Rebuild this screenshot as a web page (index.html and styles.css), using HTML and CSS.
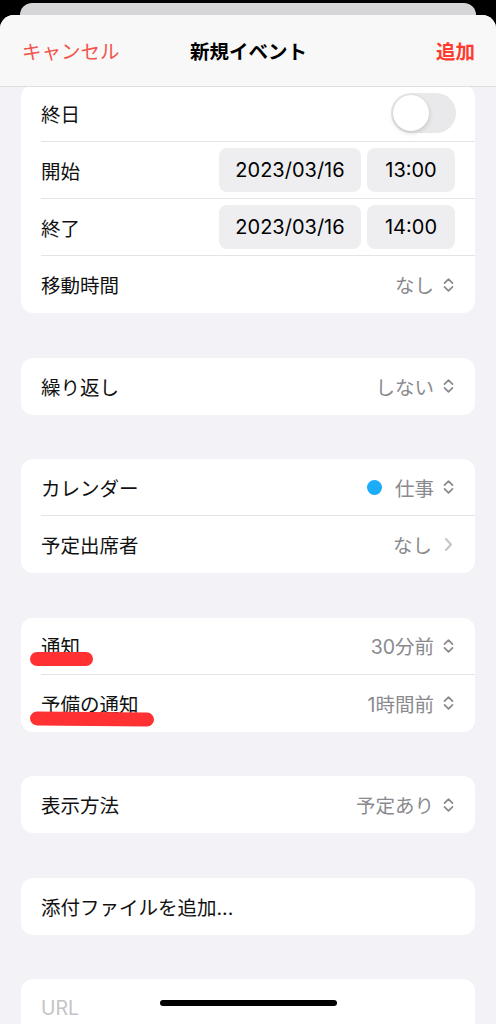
FILE: index.html
```html
<!DOCTYPE html>
<html lang="ja">
<head>
    <meta charset="UTF-8">
    <meta name="viewport" content="width=device-width, initial-scale=1.0">
    <title>新規イベント</title>
    <link rel="stylesheet" href="styles.css">
</head>
<body>
    <div class="back-card"></div>
    <div class="sheet">
        <header class="nav">
            <span class="nav-cancel">キャンセル</span>
            <span class="nav-title">新規イベント</span>
            <span class="nav-add">追加</span>
        </header>

        <main class="content">
            <section class="card">
                <div class="row">
                    <div class="row-body">
                        <span class="label">終日</span>
                        <span class="switch"><span class="knob"></span></span>
                    </div>
                </div>
                <div class="row">
                    <div class="row-body">
                        <span class="label">開始</span>
                        <span class="pills">
                            <span class="pill pill-date">2023/03/16</span>
                            <span class="pill pill-time">13:00</span>
                        </span>
                    </div>
                </div>
                <div class="row">
                    <div class="row-body">
                        <span class="label">終了</span>
                        <span class="pills">
                            <span class="pill pill-date">2023/03/16</span>
                            <span class="pill pill-time">14:00</span>
                        </span>
                    </div>
                </div>
                <div class="row">
                    <div class="row-body">
                        <span class="label">移動時間</span>
                        <span class="value">なし
                            <svg class="updown" viewBox="0 0 13 16"><path d="M2.5 6.2 L6.5 2.2 L10.5 6.2 M2.5 9.8 L6.5 13.8 L10.5 9.8"/></svg>
                        </span>
                    </div>
                </div>
            </section>

            <section class="card">
                <div class="row">
                    <div class="row-body">
                        <span class="label">繰り返し</span>
                        <span class="value">しない
                            <svg class="updown" viewBox="0 0 13 16"><path d="M2.5 6.2 L6.5 2.2 L10.5 6.2 M2.5 9.8 L6.5 13.8 L10.5 9.8"/></svg>
                        </span>
                    </div>
                </div>
            </section>

            <section class="card">
                <div class="row">
                    <div class="row-body">
                        <span class="label">カレンダー</span>
                        <span class="value"><span class="dot"></span>仕事
                            <svg class="updown" viewBox="0 0 13 16"><path d="M2.5 6.2 L6.5 2.2 L10.5 6.2 M2.5 9.8 L6.5 13.8 L10.5 9.8"/></svg>
                        </span>
                    </div>
                </div>
                <div class="row">
                    <div class="row-body">
                        <span class="label">予定出席者</span>
                        <span class="value">なし
                            <svg class="disclosure" viewBox="0 0 9 15"><path d="M2 2 L7 7.5 L2 13"/></svg>
                        </span>
                    </div>
                </div>
            </section>

            <section class="card card-marked">
                <div class="row">
                    <div class="row-body">
                        <span class="label">通知</span>
                        <span class="value">30分前
                            <svg class="updown" viewBox="0 0 13 16"><path d="M2.5 6.2 L6.5 2.2 L10.5 6.2 M2.5 9.8 L6.5 13.8 L10.5 9.8"/></svg>
                        </span>
                    </div>
                </div>
                <div class="row">
                    <div class="row-body">
                        <span class="label">予備の通知</span>
                        <span class="value">1時間前
                            <svg class="updown" viewBox="0 0 13 16"><path d="M2.5 6.2 L6.5 2.2 L10.5 6.2 M2.5 9.8 L6.5 13.8 L10.5 9.8"/></svg>
                        </span>
                    </div>
                </div>
                <!-- 手書きの赤線 -->
                <span class="mark mark-1"></span>
                <span class="mark mark-2"></span>
            </section>

            <section class="card">
                <div class="row">
                    <div class="row-body">
                        <span class="label">表示方法</span>
                        <span class="value">予定あり
                            <svg class="updown" viewBox="0 0 13 16"><path d="M2.5 6.2 L6.5 2.2 L10.5 6.2 M2.5 9.8 L6.5 13.8 L10.5 9.8"/></svg>
                        </span>
                    </div>
                </div>
            </section>

            <section class="card">
                <div class="row">
                    <div class="row-body">
                        <span class="label">添付ファイルを追加...</span>
                    </div>
                </div>
            </section>

            <section class="card">
                <div class="row">
                    <div class="row-body">
                        <span class="placeholder">URL</span>
                    </div>
                </div>
            </section>
        </main>
    </div>

    <div class="home-indicator"></div>
</body>
</html>
```

FILE: styles.css
```css
html,
body {
    height: 1024px;
    overflow: hidden;
}

body {
    margin: 0;
    padding: 0;
    background-color: #000;
    font-family: "Inter", "Noto Sans CJK JP", sans-serif;
    color: #000;
}

.back-card {
    height: 14px;
    margin: 3px 20px 0;
    background-color: #d6d6d8;
    border-radius: 12px 12px 0 0;
}

.sheet {
    margin-top: -2px;
    height: 1009px;
    background-color: #f2f2f7;
    border-radius: 14px 14px 0 0;
    overflow: hidden;
}

.nav {
    position: relative;
    z-index: 1;
    height: 71px;
    display: grid;
    grid-template-columns: 1fr auto 1fr;
    align-items: center;
    padding: 0 21px 0 22px;
    background-color: #f8f8f8;
    border-bottom: 1px solid #dedee0;
    font-size: 19.5px;
}

.nav-cancel {
    color: #f2554e;
}

.nav-title {
    font-weight: 700;
}

.nav-add {
    justify-self: end;
    color: #ff3b30;
    font-weight: 700;
}

.content {
    display: flex;
    flex-direction: column;
    gap: 44.5px;
    margin-top: -2px;
    padding: 0 21px;
}

.card {
    position: relative;
    background-color: #fff;
    border-radius: 12px;
    overflow: hidden;
}

.row {
    padding-left: 20px;
}

.row-body {
    height: 56px;
    display: flex;
    align-items: center;
    justify-content: space-between;
    padding-right: 20px;
    border-bottom: 1px solid #e4e4e7;
    font-size: 19.5px;
}

.row:last-of-type .row-body {
    height: 57px;
    border-bottom: none;
}

.label {
    color: #111;
}

.value {
    display: flex;
    align-items: center;
    color: #8a8a8e;
}

.updown {
    width: 13px;
    height: 16px;
    margin-left: 8px;
    fill: none;
    stroke: #8a8a8e;
    stroke-width: 1.7;
    stroke-linecap: round;
    stroke-linejoin: round;
}

.disclosure {
    width: 9px;
    height: 15px;
    margin-left: 12px;
    margin-right: 2px;
    fill: none;
    stroke: #c4c4c7;
    stroke-width: 2;
    stroke-linecap: round;
    stroke-linejoin: round;
}

.dot {
    width: 15px;
    height: 15px;
    border-radius: 50%;
    background-color: #1badf8;
    margin-right: 13px;
}

.switch {
    width: 65px;
    height: 40px;
    margin-right: -1px;
    border-radius: 20px;
    background-color: #e9e9eb;
    display: flex;
    align-items: center;
    padding: 0 2px;
    box-sizing: border-box;
}

.knob {
    width: 36px;
    height: 36px;
    border-radius: 50%;
    background-color: #fff;
    box-shadow: 0 2px 5px rgba(0, 0, 0, 0.15), 0 0 1px rgba(0, 0, 0, 0.12);
}

.pills {
    display: flex;
    gap: 6px;
}

.pill {
    height: 44px;
    display: flex;
    align-items: center;
    justify-content: center;
    border-radius: 8px;
    background-color: #eeeef0;
    font-size: 20px;
    color: #000;
}

.pill-date {
    width: 142px;
}

.pill-time {
    width: 88px;
}

.placeholder {
    color: #c4c4c6;
}

.mark {
    position: absolute;
    left: 9px;
    height: 14px;
    border-radius: 7px;
    background-color: #ff3132;
}

.mark-1 {
    top: 34.5px;
    width: 63px;
}

.mark-2 {
    top: 94.5px;
    width: 124px;
    transform: rotate(0.6deg);
}

.home-indicator {
    position: absolute;
    top: 1000px;
    left: 160px;
    width: 177px;
    height: 6px;
    border-radius: 3px;
    background-color: #000;
}
```
